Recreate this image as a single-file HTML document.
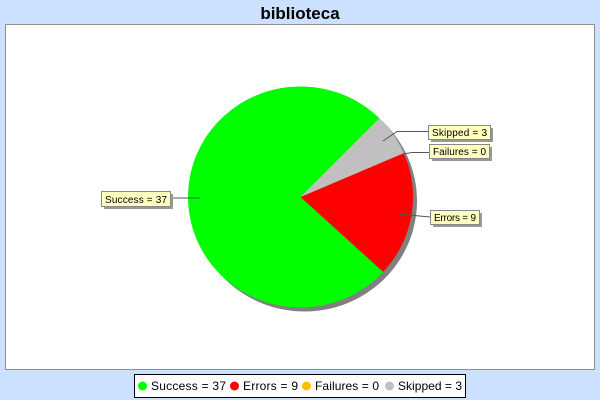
<!DOCTYPE html>
<html><head><meta charset="utf-8"><style>
html,body{margin:0;padding:0;background:#cce0ff;}
body{width:600px;height:400px;overflow:hidden;position:relative;font-family:"Liberation Sans",sans-serif;}
</style></head><body>
<svg width="600" height="400" xmlns="http://www.w3.org/2000/svg" style="position:absolute;left:0;top:0">
<rect x="0" y="0" width="600" height="400" fill="#cce0ff"/>
<text x="300" y="19" text-anchor="middle" font-family="Liberation Sans" font-weight="bold" font-size="17" fill="#000">biblioteca</text>
<rect x="5.5" y="24.5" width="589" height="345" fill="#fff" stroke="#909090"/>
<ellipse cx="304.5" cy="201" rx="112.5" ry="110.5" fill="#808080"/>
<path d="M300.5 197 L379.4 118.2 A112.5 110.5 0 1 0 383.2 271.9 Z" fill="#00ff00"/>
<path d="M300.5 197 L403.8 153.1 A112.5 110.5 0 0 1 383.2 271.9 Z" fill="#ff0000"/>
<path d="M300.5 197 L379.4 118.2 A112.5 110.5 0 0 1 403.8 153.1 Z" fill="#c0c0c0"/>
<g stroke="#555" stroke-width="1" fill="none">
<path d="M200 198 L170 198"/>
<path d="M383 141 L397 131.5 L428 131.5"/>
<path d="M403 154 L412 152.5 L429 152.5"/>
<path d="M399 214 L430 217"/>
</g>
<g font-family="Liberation Sans" font-size="10" fill="#000">
<rect x="104" y="194" width="69" height="15" fill="#999"/>
<rect x="101.5" y="191.5" width="69" height="15" fill="#ffffc0" stroke="#888"/>
<text x="105" y="203" textLength="62">Success = 37</text>
<rect x="431" y="128" width="62" height="14" fill="#999"/>
<rect x="428.5" y="125.5" width="62" height="14" fill="#ffffc0" stroke="#888"/>
<text x="432" y="136" textLength="55">Skipped = 3</text>
<rect x="432" y="147" width="60" height="14" fill="#999"/>
<rect x="429.5" y="144.5" width="60" height="14" fill="#ffffc0" stroke="#888"/>
<text x="433" y="155" textLength="53">Failures = 0</text>
<rect x="433" y="213" width="49" height="14" fill="#999"/>
<rect x="430.5" y="210.5" width="49" height="14" fill="#ffffc0" stroke="#888"/>
<text x="434" y="221" textLength="42">Errors = 9</text>
</g>
<rect x="134.5" y="374.5" width="331" height="23" fill="#fff" stroke="#000"/>
<g font-family="Liberation Sans" font-size="12" fill="#000">
<circle cx="142.5" cy="386" r="4.5" fill="#00ff00"/>
<text x="151" y="390" textLength="75">Success = 37</text>
<circle cx="234.5" cy="386" r="4.5" fill="#ff0000"/>
<text x="243" y="390" textLength="55">Errors = 9</text>
<circle cx="306.5" cy="386" r="4.5" fill="#ffc000"/>
<text x="315" y="390" textLength="64">Failures = 0</text>
<circle cx="389.5" cy="386" r="4.5" fill="#c0c0c0"/>
<text x="398" y="390" textLength="64">Skipped = 3</text>
</g>
</svg>
</body></html>
